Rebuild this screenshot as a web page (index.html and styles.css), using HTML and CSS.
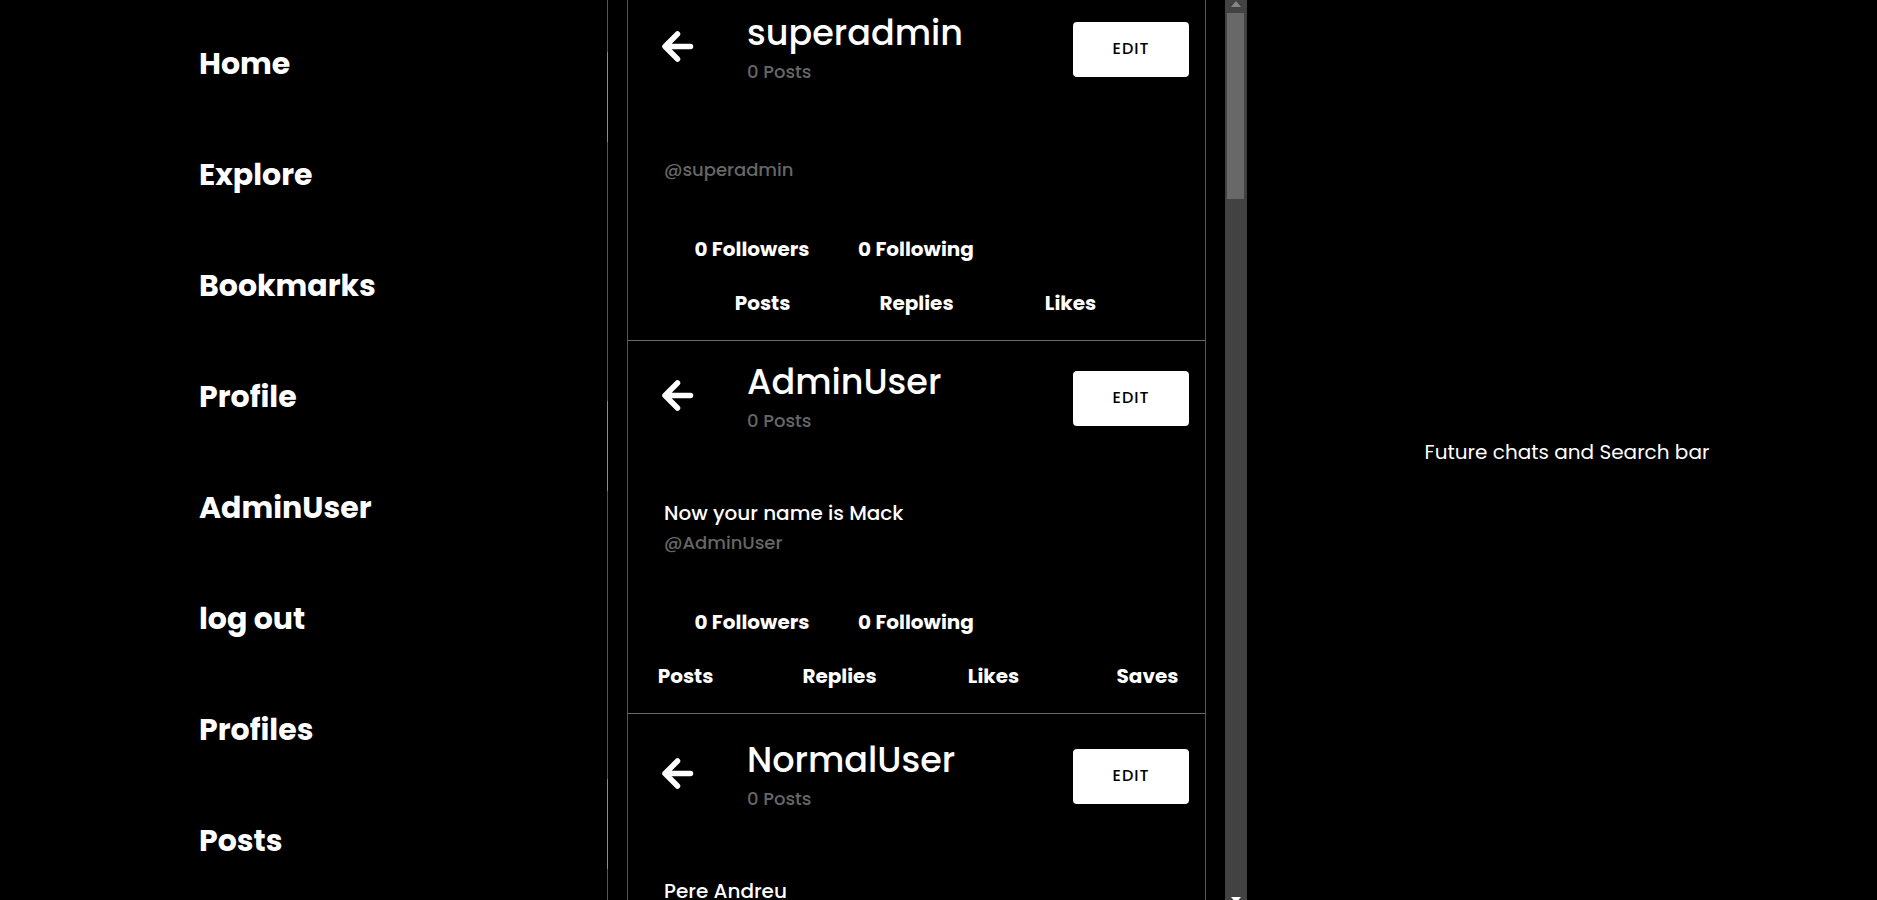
FILE: index.html
```
<!DOCTYPE html>
<html lang="en">
<head>
<meta charset="utf-8">
<title>Profiles</title>
<link rel="stylesheet" href="styles.css">
</head>
<body>
<svg class="sprite" aria-hidden="true">
  <symbol id="arrow" viewBox="0 0 32 32">
    <path d="M28.500 15.500H4M15.500 3 3 15.500 15.500 28" fill="none" stroke="currentColor" stroke-width="5.500" stroke-linecap="round" stroke-linejoin="round"/>
  </symbol>
</svg>
<div class="layout">
  <nav class="menu">
    <a href="#">Home</a>
    <a href="#">Explore</a>
    <a href="#">Bookmarks</a>
    <a href="#">Profile</a>
    <a href="#">AdminUser</a>
    <a href="#">log out</a>
    <a href="#">Profiles</a>
    <a href="#">Posts</a>
  </nav>
  <div class="feed">
    <main class="cards">
      <article class="card card-first">
        <span class="avatar"></span>
        <header class="head">
          <button class="back" aria-label="Back"><svg><use href="#arrow"/></svg></button>
          <div class="title"><h2>superadmin</h2><p class="muted">0 Posts</p></div>
          <button class="edit">EDIT</button>
        </header>
        <div class="bio"><p class="name"></p><p class="muted">@superadmin</p></div>
        <div class="counts"><a href="#">0 Followers</a><a href="#">0 Following</a></div>
        <div class="tabs"><a href="#">Posts</a><a href="#">Replies</a><a href="#">Likes</a></div>
      </article>
      <article class="card">
        <span class="avatar"></span>
        <header class="head">
          <button class="back" aria-label="Back"><svg><use href="#arrow"/></svg></button>
          <div class="title"><h2>AdminUser</h2><p class="muted">0 Posts</p></div>
          <button class="edit">EDIT</button>
        </header>
        <div class="bio"><p class="name">Now your name is Mack</p><p class="muted">@AdminUser</p></div>
        <div class="counts"><a href="#">0 Followers</a><a href="#">0 Following</a></div>
        <div class="tabs"><a href="#">Posts</a><a href="#">Replies</a><a href="#">Likes</a><a href="#">Saves</a></div>
      </article>
      <article class="card card-spaced">
        <span class="avatar"></span>
        <header class="head">
          <button class="back" aria-label="Back"><svg><use href="#arrow"/></svg></button>
          <div class="title"><h2>NormalUser</h2><p class="muted">0 Posts</p></div>
          <button class="edit">EDIT</button>
        </header>
        <div class="bio"><p class="name">Pere Andreu</p></div>
      </article>
    </main>
    <div class="track">
      <svg class="up" viewBox="0 0 10 6"><path d="M5 0 10 6H0z"/></svg>
      <div class="thumb"></div>
      <svg class="down" viewBox="0 0 10 6"><path d="M0 0H10L5 6z"/></svg>
    </div>
  </div>
  <aside class="side"><p>Future chats and Search bar</p></aside>
</div>
</body>
</html>
```
FILE: styles.css
```
* { box-sizing: border-box; }
body {
  margin: 0;
  background: #000;
  color: #fff;
  font-family: Poppins, Inter, sans-serif;
  font-size: 20px;
  line-height: 28px;
}
h2, p { margin: 0; }
a { color: inherit; text-decoration: none; }
button { font-family: inherit; cursor: pointer; }
.sprite { display: none; }
.layout {
  display: grid;
  grid-template-columns: 607fr 640fr 630fr;
  height: 100vh;
  overflow: hidden;
}
.menu {
  display: flex;
  flex-direction: column;
  gap: 63px;
  padding: 40px 0 0 199px;
}
.menu a { font-size: 30px; line-height: 48px; font-weight: 700; }
.feed { display: flex; min-width: 0; height: 100vh; overflow: hidden; }
.cards {
  flex: 1;
  min-width: 0;
  height: max-content;
  min-height: 100%;
  padding: 0 19px;
  border-left: 1px solid #555;
}
.card {
  position: relative;
  padding: 19px 0 23px;
  border: 1px solid #555;
  border-width: 0 1px 1px;
  border-bottom-color: #6a6a6a;
}
.card-first { padding-top: 11px; }
.card-spaced { padding-top: 24px; }
.head { display: flex; align-items: flex-start; }
.avatar {
  position: absolute;
  left: -21px;
  top: 60px;
  width: 1px;
  height: 90px;
  background: #8c8c8c;
}
.card-first .avatar { top: 52px; }
.card-spaced .avatar { top: 65px; }
.back {
  flex: none;
  width: 32px;
  height: 32px;
  margin: 20px 53px 0 34px;
  padding: 0;
  border: 0;
  background: none;
  color: #fff;
}
.back svg { display: block; width: 32px; height: 32px; }
.title { flex: 1; display: grid; gap: 5px; }
.title h2 { font-size: 35px; line-height: 44px; font-weight: 500; }
.muted { color: #666; font-size: 18px; line-height: 24px; font-weight: 500; }
.edit {
  flex: none;
  width: 116px;
  height: 55px;
  padding: 0 0 2px;
  margin: 11px 16px 0 0;
  border: 0;
  border-radius: 4px;
  background: #fff;
  color: #000;
  font-size: 16px;
  font-weight: 500;
  letter-spacing: 1px;
}
.bio { display: grid; gap: 4px; margin: 66px 0 53px 36px; }
.name { min-height: 4px; font-weight: 500; }
.counts { display: flex; padding-left: 42px; }
.counts a { flex: 0 0 164px; text-align: center; font-weight: 700; }
.tabs { display: flex; justify-content: center; margin-top: 26px; }
.tabs a { flex: 0 0 154px; text-align: center; font-weight: 700; }
.track {
  display: flex;
  flex-direction: column;
  align-items: center;
  flex: 0 0 22px;
  padding: 1px 1px 0 0;
  background: #424242;
}
.up, .down { flex: none; width: 10px; height: 6px; }
.up { fill: #868686; }
.down { margin: auto 0 -3px; fill: #fff; }
.thumb { flex: none; width: 17px; height: 186px; margin-top: 6px; background: #686868; }
.side { display: grid; place-items: center; padding-left: 10px; }
.side p { margin-top: 4px; }
```
